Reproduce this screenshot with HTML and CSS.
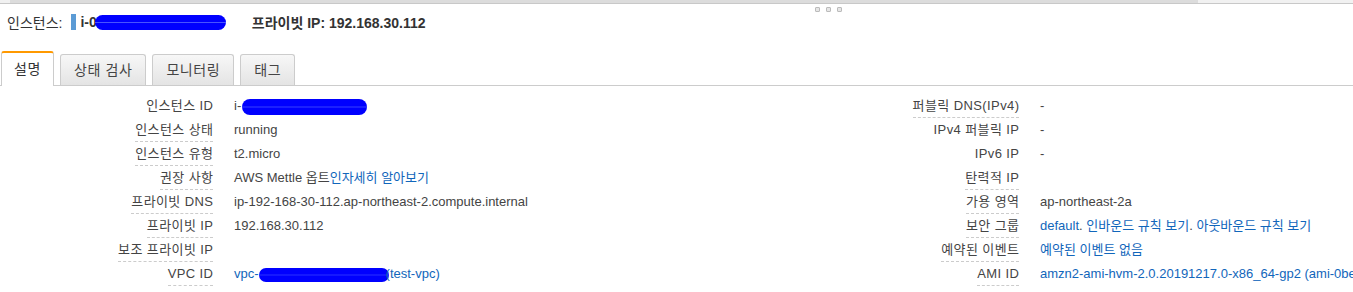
FILE: index.html
```html
<!DOCTYPE html>
<html lang="ko">
<head>
    <meta charset="UTF-8">
    <meta name="viewport" content="width=device-width, initial-scale=1.0">
    <title>인스턴스 설명</title>
    <link rel="stylesheet" href="styles.css">
</head>
<body>
    <div class="scrollbar"><div class="thumb"></div></div>
    <div class="grip"><span></span><span></span><span></span></div>

    <div class="header">
        <span class="header-label">인스턴스:</span>
        <span class="status-bar"></span>
        <strong>i-0</strong><span class="redact header-redact"></span>
        <strong class="private-ip">프라이빗 IP: 192.168.30.112</strong>
    </div>

    <div class="tabs">
        <div class="tab active">설명</div>
        <div class="tab">상태 검사</div>
        <div class="tab">모니터링</div>
        <div class="tab">태그</div>
    </div>

    <div class="details">
        <div class="column left">
            <div class="row"><div class="label"><span class="term plain">인스턴스 ID</span></div><div class="value">i-<span class="redact id-redact"></span></div></div>
            <div class="row"><div class="label"><span class="term">인스턴스 상태</span></div><div class="value">running</div></div>
            <div class="row"><div class="label"><span class="term">인스턴스 유형</span></div><div class="value">t2.micro</div></div>
            <div class="row"><div class="label"><span class="term">권장 사항</span></div><div class="value">AWS Mettle 옵트<a href="#">인자세히 알아보기</a></div></div>
            <div class="row"><div class="label"><span class="term">프라이빗 DNS</span></div><div class="value">ip-192-168-30-112.ap-northeast-2.compute.internal</div></div>
            <div class="row"><div class="label"><span class="term">프라이빗 IP</span></div><div class="value">192.168.30.112</div></div>
            <div class="row"><div class="label"><span class="term">보조 프라이빗 IP</span></div><div class="value"></div></div>
            <div class="row"><div class="label"><span class="term">VPC ID</span></div><div class="value"><a href="#">vpc-<span class="redact vpc-redact"></span>(test-vpc)</a></div></div>
        </div>
        <div class="column right">
            <div class="row"><div class="label"><span class="term">퍼블릭 DNS(IPv4)</span></div><div class="value">-</div></div>
            <div class="row"><div class="label"><span class="term plain">IPv4 퍼블릭 IP</span></div><div class="value">-</div></div>
            <div class="row"><div class="label"><span class="term plain">IPv6 IP</span></div><div class="value">-</div></div>
            <div class="row"><div class="label"><span class="term">탄력적 IP</span></div><div class="value"></div></div>
            <div class="row"><div class="label"><span class="term">가용 영역</span></div><div class="value">ap-northeast-2a</div></div>
            <div class="row"><div class="label"><span class="term">보안 그룹</span></div><div class="value"><a href="#">default</a>. <a href="#">인바운드 규칙 보기</a>. <a href="#">아웃바운드 규칙 보기</a></div></div>
            <div class="row"><div class="label"><span class="term">예약된 이벤트</span></div><div class="value"><a href="#">예약된 이벤트 없음</a></div></div>
            <div class="row"><div class="label"><span class="term">AMI ID</span></div><div class="value"><a href="#">amzn2-ami-hvm-2.0.20191217.0-x86_64-gp2 (ami-0bea7fd38fabe821a)</a></div></div>
        </div>
    </div>
</body>
</html>
```

FILE: styles.css
```css
* {
    margin: 0;
    padding: 0;
    box-sizing: border-box;
}

body {
    font-family: "Liberation Sans", "Noto Sans CJK KR", sans-serif;
    font-size: 13px;
    color: #444;
    background: white;
    overflow: hidden;
    position: relative;
}

a {
    color: #1166bb;
    text-decoration: none;
}

.scrollbar {
    height: 4px;
    background: #f1f1f1;
    border-bottom: 1px solid #c8c8c8;
}

.scrollbar .thumb {
    margin-left: 10px;
    width: 1188px;
    height: 3px;
    background: #dcdcdc;
}

.grip {
    position: absolute;
    top: 7px;
    left: 815px;
    display: flex;
    gap: 6px;
}

.grip span {
    width: 5px;
    height: 5px;
    background: #e6e6e6;
    border: 1px solid #bbb;
    border-radius: 1px;
}

.header {
    height: 36px;
    padding-left: 7px;
    font-size: 14px;
    color: #333;
    display: flex;
    align-items: center;
    white-space: nowrap;
}

.header-label {
    margin-right: 9px;
}

.status-bar {
    width: 5px;
    height: 16px;
    background: #5b9bd5;
    margin-right: 4px;
}

.redact {
    display: inline-block;
    background: #0000ff;
    border-radius: 8px;
    vertical-align: middle;
    background-image: linear-gradient(transparent 45%, rgba(120, 140, 255, 0.6) 50%, transparent 55%);
}

.header-redact {
    width: 131px;
    height: 15px;
    margin-left: -2px;
}

.private-ip {
    margin-left: 26px;
}

.tabs {
    display: flex;
    align-items: flex-end;
    height: 46px;
    padding-left: 1px;
    border-bottom: 1px solid #ccc;
}

.tab {
    height: 31px;
    line-height: 30px;
    padding: 0 13px;
    margin-right: 6px;
    font-size: 14px;
    letter-spacing: 0.6px;
    color: #444;
    border: 1px solid #ccc;
    border-bottom: none;
    border-radius: 3px 3px 0 0;
    background: linear-gradient(#f7f7f7, #e4e4e4);
}

.tab.active {
    height: 35px;
    line-height: 33px;
    margin-bottom: -1px;
    padding: 0 12px;
    background: white;
    color: #333;
    border-top: 2px solid #f90;
}

.details {
    display: flex;
    padding-top: 8px;
    white-space: nowrap;
}

.column.left {
    width: 806px;
    flex-shrink: 0;
}

.column.right {
    flex: 1;
    min-width: 0;
    overflow: hidden;
}

.row {
    display: flex;
    height: 24px;
}

.label {
    width: 213px;
    flex-shrink: 0;
    text-align: right;
}

.term {
    display: inline-block;
    line-height: 23px;
    letter-spacing: 0.4px;
    margin-right: -0.4px;
    border-bottom: 1px dashed #ccc;
}

.term.plain {
    border-bottom-color: transparent;
}

.value {
    line-height: 23px;
    padding-left: 21px;
}

.id-redact {
    width: 125px;
    height: 16px;
    margin-left: 1px;
}

.vpc-redact {
    width: 130px;
    height: 14px;
    margin-right: -3px;
}
```
